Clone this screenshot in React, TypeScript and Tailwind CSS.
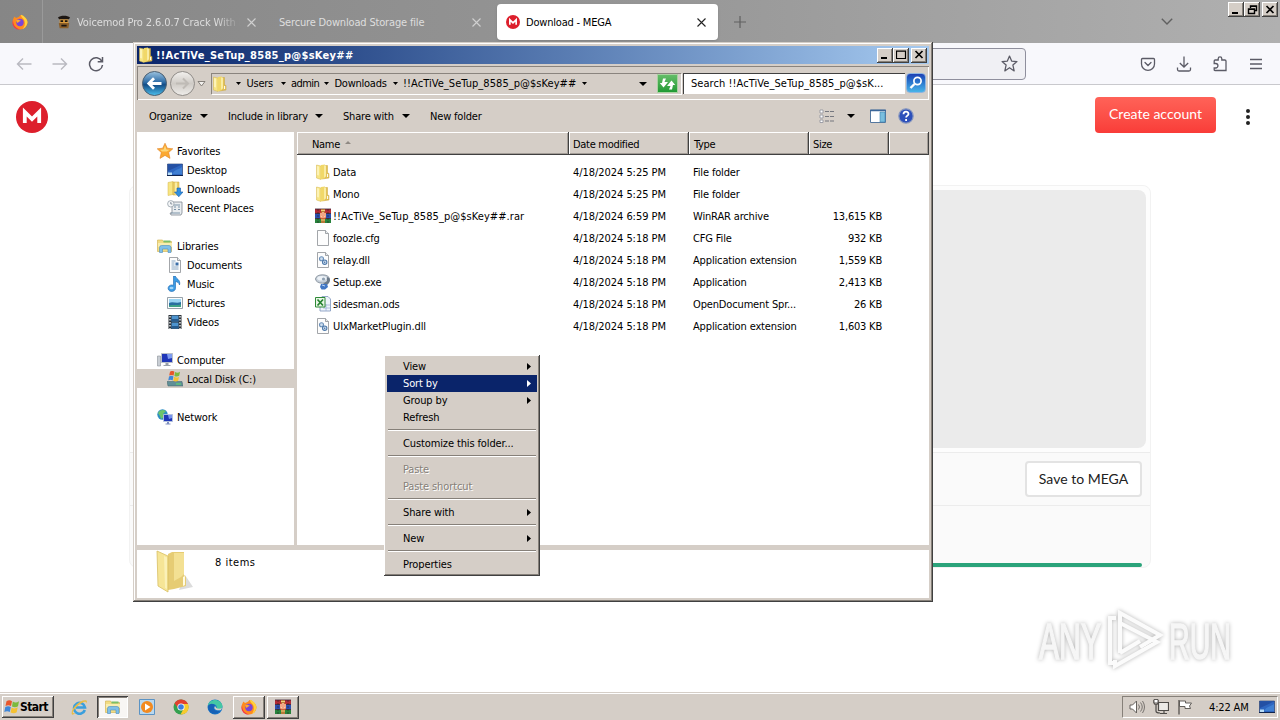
import type { ReactNode } from 'react';
import clsx from 'clsx';

const raised =
  'bg-[#d5cec7] shadow-[inset_-1px_-1px_#404040,inset_1px_1px_#ffffff,inset_-2px_-2px_#868079]';

const Svg = ({ children, size = 16 }: { children: ReactNode; size?: number }) => (
  <svg width={size} height={size} viewBox="0 0 16 16" className="block shrink-0">
    {children}
  </svg>
);

const Caret = () => (
  <svg width="8" height="4" viewBox="0 0 8 4" className="block shrink-0">
    <path d="M0 0h8L4 4z" fill="#000" />
  </svg>
);

const SmallCaret = () => (
  <svg width="5" height="3" viewBox="0 0 5 3" className="block shrink-0">
    <path d="M0 0h5L2.5 3z" fill="#000" />
  </svg>
);

const FolderIcon = () => (
  <Svg>
    <path d="M7 1.500h5.500V9l1.500.5v4.500l-7 1z" fill="#e3c255" stroke="#c9a53c" strokeWidth=".5" />
    <path d="M1.500 1l4.500 1v13.500l-4.500-1.500z" fill="#f7e583" stroke="#d5b54a" strokeWidth=".5" />
    <path d="M6 1l4-.5v13.500L6 15.500z" fill="#f1d868" />
    <path d="M9 1.500l2 0v11l-2 1z" fill="#f9eca4" />
    <path d="M2.200 2l1.600.4v9l-1.600-.4z" fill="#fdf6c4" />
    <path d="M12.600 10v3" stroke="#fff" />
  </Svg>
);

const RarIcon = ({ size = 16 }: { size?: number }) => (
  <Svg size={size}>
    <path d="M0 1h16v4.500H0z" fill="#b32a35" />
    <path d="M0 5.500h16v5H0z" fill="#2d4fb0" />
    <path d="M0 10.500h16V15H0z" fill="#28833c" />
    <path d="M0 5.500h16M0 10.500h16M0 1h16" stroke="#3a2033" strokeWidth=".8" />
    <path d="M3 1v14M13 1v14" stroke="#222" strokeWidth=".6" strokeDasharray="2 1" />
    <path d="M6 1h4v14H6z" fill="#b97b39" />
    <path d="M5 4.500h6v6H5z" fill="#e04d2f" />
    <path d="M6 5v4h4V5M8 4v4" stroke="#fff3cf" strokeWidth="1.100" fill="none" />
    <path d="M6 12h4M6 2.500h4" stroke="#f0cf7c" />
  </Svg>
);

const PageIcon = ({ children }: { children?: ReactNode }) => (
  <Svg>
    <path d="M2.500.5h8l3 3v12h-11z" fill="#fdfdfd" stroke="#8b8f94" strokeWidth=".8" />
    <path d="M10.500.5v3h3" fill="#e8ecef" stroke="#8b8f94" strokeWidth=".8" />
    {children}
  </Svg>
);

const DllIcon = () => (
  <PageIcon>
    <circle cx="6.500" cy="6.800" r="2" fill="#cfdff0" stroke="#6a8fb8" strokeWidth="1.100" />
    <circle cx="9.700" cy="10.200" r="2.200" fill="#cfdff0" stroke="#4f7aab" strokeWidth="1.100" />
    <circle cx="9.700" cy="10.200" r=".7" fill="#3f6b9f" />
  </PageIcon>
);

const SetupIcon = () => (
  <Svg>
    <ellipse cx="7.500" cy="5" rx="7" ry="4.200" fill="#c7d0da" stroke="#77838f" strokeWidth=".8" />
    <ellipse cx="6.800" cy="4.200" rx="4.500" ry="2.300" fill="#edf2f7" />
    <circle cx="8.500" cy="5" r="1.600" fill="#8fa0b2" />
    <path d="M12 3c3 1 4 3 2 6l-3 3-3-2 4-3z" fill="#6c7a89" />
    <path d="M6 10h6l1 3-3 2.500H6.500L5 13z" fill="#4277c4" />
    <path d="M7 11l3 1" stroke="#bcd6f6" />
  </Svg>
);

const OdsIcon = () => (
  <Svg>
    <path d="M7 .5h6l2.500 2.500v12H5V4z" fill="#eef3fb" stroke="#7f95bd" strokeWidth=".8" />
    <path d="M8 9h7M8 12h7M11 8v7" stroke="#9fb2d6" strokeWidth=".8" />
    <path d="M.5 1.500h9.500v9.500H.5z" fill="#e9f6e7" stroke="#2f8a37" />
    <path d="M2.500 3.500l5.500 6M8 3.500l-5.500 6" stroke="#23812d" strokeWidth="1.700" />
  </Svg>
);

const StarIcon = () => (
  <Svg>
    <path
      d="M8 .2l2.300 5 5.500.6-4.100 3.700 1.300 5.900L8 12.400l-5 3 1.300-5.900L.2 5.800l5.500-.6z"
      fill="#fba932"
      stroke="#e08326"
      strokeWidth=".6"
    />
    <path d="M8 2.500l1.400 4 3.400.3-3 1.800H5L3 6.800l3.600-.3z" fill="#fdd77a" />
  </Svg>
);

const DesktopIcon = () => (
  <Svg>
    <path d="M.5 2h15v11.500H.5z" fill="#2e66c0" stroke="#1b3266" strokeWidth=".6" />
    <path d="M1 2.500h14L1 9z" fill="#2450a4" />
    <path d="M5 12c3-5 6-4 10-7v7z" fill="#3f7fd2" />
    <path d="M1 10.500h4v2.500H1z" fill="#b7dcf7" />
    <path d="M0 13.500h16" stroke="#10244d" />
  </Svg>
);

const DownloadsIcon = () => (
  <Svg>
    <path d="M1 1.500l5-1v13l-5 1z" fill="#f7e583" stroke="#d5b54a" strokeWidth=".5" />
    <path d="M6 1h6v13H6z" fill="#ecd069" stroke="#c9a53c" strokeWidth=".5" />
    <path d="M8 1.500h2v12H8z" fill="#f9eca4" />
    <path d="M10 7h3.500v4H16l-4.200 4.800L7.500 11H10z" fill="#2f8fe0" stroke="#1a5ca8" strokeWidth=".6" />
  </Svg>
);

const RecentIcon = () => (
  <Svg>
    <path d="M5 2h10v11l-1 2H4l-1-2h2z" fill="#e9edf0" stroke="#7d878f" strokeWidth=".8" />
    <path d="M7 5h6M7 7h2M11 7h2M7 9.500h2M11 9.500h2M4 13h9" stroke="#7c94a8" />
    <circle cx="3.800" cy="3.800" r="3.200" fill="#f4f6f8" stroke="#96a0a8" strokeWidth=".8" />
    <path d="M3.800 2v2h1.500" stroke="#5c6b78" strokeWidth=".7" fill="none" />
  </Svg>
);

const LibraryIcon = ({ size = 16 }: { size?: number }) => (
  <Svg size={size}>
    <path d="M.5 2h5l1 1.500h8v10H.5z" fill="#f2dc83" stroke="#cfae4b" strokeWidth=".6" />
    <path d="M6.500 2.500h7v2h-7z" fill="#7bbf67" />
    <path d="M1 5h14v4H1z" fill="#f9edaf" />
    <path d="M2.500 14.500V9.500q0-2 2-2h7.500q2 0 2 2v5h-3V11H5.500v3.500z" fill="#7fbfe8" stroke="#4a8dc0" strokeWidth=".6" />
  </Svg>
);

const DocumentsIcon = () => (
  <PageIcon>
    <path d="M4.500 4h4M4.500 6h3M4.500 8h3M4.500 10h7M4.500 12h7" stroke="#7c9cbc" strokeWidth=".9" />
    <path d="M8.500 5.500h3v3h-3z" fill="#3b6ea8" />
  </PageIcon>
);

const MusicIcon = () => (
  <Svg>
    <path
      d="M6.500 0h1.800c.7 3 5.700 3.500 4.200 9-.3-2-2-3.200-4-3.500v6.800a3.700 3.300 0 1 1-2-3z"
      fill="#3b9be4"
      stroke="#1d66b0"
      strokeWidth=".6"
    />
    <ellipse cx="4.500" cy="12" rx="2" ry="1.300" fill="#9fd4f8" />
  </Svg>
);

const PicturesIcon = () => (
  <Svg>
    <path d="M.5 2.500h15v11H.5z" fill="#fafcfd" stroke="#7e8a94" strokeWidth=".8" />
    <path d="M2 4h12v8H2z" fill="#9bd5f3" />
    <path d="M2 8c4-2 7 1 12-1v5H2z" fill="#2a6fa0" />
    <path d="M2 10.500c4-1 8 0 12-1V12H2z" fill="#3fa386" />
  </Svg>
);

const VideosIcon = () => (
  <Svg>
    <path d="M1.500 1h13v14h-13z" fill="#2b3036" />
    <path d="M4.500 1.500h7v6h-7zM4.500 8.500h7v6h-7z" fill="#4d94cf" />
    <path d="M4.500 5h7v2.500h-7zM4.500 12h7v2.500h-7z" fill="#275c8f" />
    <path d="M3 2v13M13 2v13" stroke="#e9edf0" strokeWidth="1.400" strokeDasharray="1.500 1.500" />
  </Svg>
);

const ComputerIcon = () => (
  <Svg>
    <path d="M.5 4h3v10h-3z" fill="#c9ced4" stroke="#8a9097" strokeWidth=".6" />
    <path d="M4.500 1.500h11v9h-11z" fill="#1f36b8" stroke="#b9bfc8" />
    <path d="M10 2h5v4l-4 1z" fill="#7d9bf0" />
    <path d="M8.500 11h3v2h2v1h-7v-1h2z" fill="#9aa1aa" />
  </Svg>
);

const FlagMark = () => (
  <>
    <path d="M2.500 2.200c2-1.500 4-1.200 5.500 0L7 7c-1.500-1-3.500-1.200-5.500 0z" fill="#e8562b" />
    <path d="M8.800 2.600c2 1.200 4 1.200 6.200-.3L14 7.200c-2 1.300-4 1.200-6 .2z" fill="#7cba3d" />
    <path d="M1.300 8c2-1.200 4-1 5.500 0l-1 5c-1.500-1-3.500-1.200-5.500 0z" fill="#3f86d8" />
    <path d="M7.600 8.500c2 1.200 4 1.200 6.100-.2l-1 5c-2 1.300-4 1.200-6.100.2z" fill="#f5c133" />
  </>
);

const DiskIcon = () => (
  <Svg>
    <path d="M0 10.500h15l1 4.500H1z" fill="#5f8f97" stroke="#3e6067" strokeWidth=".5" />
    <path d="M9 13h5" stroke="#5ce06a" />
    <g transform="translate(1 -1) scale(.8)">
      <FlagMark />
    </g>
  </Svg>
);

const NetworkIcon = () => (
  <Svg>
    <circle cx="5.500" cy="5.500" r="5.200" fill="#2c8fc4" />
    <path d="M1 4c3-4 5-3 8-2L6 5l1 3-3 2-1-3z" fill="#6ec46b" />
    <path d="M6.500 5.500h9v7h-9z" fill="#1f36b8" stroke="#b9c6dc" strokeWidth=".9" />
    <path d="M11 6h4v3l-3 1z" fill="#7894ee" />
    <path d="M10 13h2v1.500h1.500v1h-5v-1H10z" fill="#7f8fc0" />
  </Svg>
);

const FirefoxIcon = ({ size = 16 }: { size?: number }) => (
  <Svg size={size}>
    <path d="M8.500 1c2 0 3 1 3.500 2 1 .4 3.500 2.500 3.500 5.500a7.500 7 0 0 1-15 0C.5 6 1.500 4 2.500 2.500L4 4c2-1 3-1 4.500-3z" fill="#ff8a1f" />
    <path d="M9 .8c3 1 6.500 4 6.500 8-1 4-3 5.500-5 6.200 2-2 3-5 2-8S9 4 9 .8z" fill="#ffd13b" />
    <path d="M1 6c0 5 2.500 8.500 7.500 9.500-5 .5-8-3-8-7z" fill="#f3314c" />
    <circle cx="8" cy="8.500" r="3.700" fill="#7a45d8" />
    <path d="M4 6.500c2-1.500 3.500-.5 5 .5-2 0-2 1-3.500 2z" fill="#ffab2e" />
  </Svg>
);

const MegaIcon = ({ size }: { size: number }) => (
  <Svg size={size}>
    <circle cx="8" cy="8" r="8" fill="#dd1f2c" />
    <path d="M4.400 11V5.500L8 9l3.600-3.500V11" fill="none" stroke="#fff" strokeWidth="1.900" />
  </Svg>
);

const WinControl = ({ kind }: { kind: 'min' | 'max' | 'restore' | 'close' }) => (
  <div className={clsx('flex h-[15px] w-4 items-center justify-center', kind === 'close' && 'ml-[2px]', raised)}>
    <svg width="11" height="10" viewBox="0 0 11 10" fill="none" stroke="#000">
      {kind === 'min' && <path d="M1 8h6" strokeWidth="2" />}
      {kind === 'max' && <path d="M.5 1h9v7.500h-9zM0 1.200h10" strokeWidth="1.200" />}
      {kind === 'restore' && <path d="M3.500 3V1h6v4.500h-2M1.500 4h6v4.500h-6zM1 4.200h7M3 1.200h7" strokeWidth="1.400" />}
      {kind === 'close' && <path d="M1.500 1l7 7M8.500 1l-7 7" strokeWidth="1.700" />}
    </svg>
  </div>
);

const CloseGlyph = ({ className }: { className: string }) => (
  <svg width="9" height="9" viewBox="0 0 9 9" className={className}>
    <path d="M.5.5l8 8M8.500.5l-8 8" stroke="currentColor" strokeWidth="1.100" />
  </svg>
);

const BrowserTabs = () => (
  <div className="flex h-[43px] bg-linear-to-r from-[#868686] via-[#969696] to-[#b0b0b0]">
    <div className="flex w-[43px] items-center border-r border-[#9a9a9a] pl-3">
      <FirefoxIcon />
    </div>
    <div className="flex w-[222px] items-center pt-px pl-[14px] text-[#dedede]">
      <Svg size={14}>
        <path d="M1 3c3-3 11-3 14 0l-2 2H3z" fill="#1d1713" />
        <path d="M3 5h10v5H3z" fill="#d89a3c" />
        <path d="M2 9h12l-1 6H3z" fill="#8b5f2a" />
        <path d="M4 6h3v2H4zM9 6h3v2H9zM5 11h6v2H5z" fill="#191411" />
      </Svg>
      <span className="ml-[6px] w-[164px] overflow-hidden py-px whitespace-nowrap mask-r-from-85% tracking-[-0.1px]">
        Voicemod Pro 2.6.0.7 Crack With L
      </span>
      <CloseGlyph className="ml-[6px] text-[#d0d0d0]" />
    </div>
    <div className="flex w-[232px] items-center pt-px pl-[14px] text-[#dedede]">
      <span className="w-[193px] whitespace-nowrap tracking-[-0.17px]">Sercure Download Storage file</span>
      <CloseGlyph className="text-[#d0d0d0]" />
    </div>
    <div className="mt-1 flex h-9 w-[221px] items-center rounded bg-white pl-[9px] shadow-sm">
      <MegaIcon size={14} />
      <span className="mt-px ml-[6px] w-[171px] whitespace-nowrap tracking-[-0.2px]">Download - MEGA</span>
      <CloseGlyph className="text-[#222]" />
    </div>
    <svg width="12" height="12" viewBox="0 0 12 12" className="mt-4 ml-4">
      <path d="M6 0v12M0 6h12" stroke="#606060" strokeWidth="1.200" />
    </svg>
    <svg width="12" height="7" viewBox="0 0 12 7" className="mt-[18px] ml-auto">
      <path d="M.8.8L6 6l5.200-5.200" stroke="#606060" strokeWidth="1.400" fill="none" />
    </svg>
    <div className="mt-[2px] mr-[2px] ml-[55px] flex">
      <WinControl kind="min" />
      <WinControl kind="restore" />
      <WinControl kind="close" />
    </div>
  </div>
);

const BrowserNav = () => (
  <div className="flex h-[42px] items-center border-b border-[#c9c9cd] bg-[#f8f8fc] pr-4 pl-4 text-[#5b5b66]">
    <svg width="16" height="16" viewBox="0 0 16 16" className="text-[#b9b9c0]" fill="none" stroke="currentColor" strokeWidth="1.400">
      <path d="M15.500 8H1.500M7 2.500L1.500 8 7 13.500" />
    </svg>
    <svg width="16" height="16" viewBox="0 0 16 16" className="ml-5 text-[#b9b9c0]" fill="none" stroke="currentColor" strokeWidth="1.400">
      <path d="M.5 8h14M9 2.500L14.500 8 9 13.500" />
    </svg>
    <svg width="16" height="16" viewBox="0 0 16 16" className="ml-5" fill="none" stroke="currentColor" strokeWidth="1.500">
      <path d="M13.800 5.200A6.500 6.500 0 1 0 14.500 9M14.500 1v4.800H9.700" />
    </svg>
    <div className="ml-[64px] flex h-8 w-[858px] items-center justify-end rounded border border-[#8f8f9d] bg-[#f0f0f4] pr-[7px]">
      <svg width="17" height="17" viewBox="0 0 16 16" fill="none" stroke="currentColor" strokeWidth="1.200">
        <path d="M8 1l2 4.700 5 .5-3.800 3.300L12.400 15 8 12l-4.400 3 1.200-5.500L1 6.200l5-.5z" strokeLinejoin="round" />
      </svg>
    </div>
    <div className="ml-auto flex gap-5">
      <svg width="16" height="16" viewBox="0 0 16 16" fill="none" stroke="currentColor" strokeWidth="1.300">
        <path d="M2.500 2.500h11q1 0 1 1V8a6.500 6.300 0 0 1-13 0V3.500q0-1 1-1z" />
        <path d="M5 6.500l3 3 3-3" strokeLinecap="round" />
      </svg>
      <svg width="16" height="16" viewBox="0 0 16 16" fill="none" stroke="currentColor" strokeWidth="1.300">
        <path d="M8 .5V11M3.800 7L8 11l4.200-4M1.500 11.500v2q0 1.500 1.500 1.500h10q1.500 0 1.500-1.500v-2" />
      </svg>
      <svg width="16" height="16" viewBox="0 0 16 16" fill="none" stroke="currentColor" strokeWidth="1.300">
        <path d="M2.200 7.500V5q0-1 1-1h3V2.700a1.800 1.800 0 0 1 3.600 0V4h3q1.200 0 1.200 1v9.500H3q-.8 0-.8-1V12h1.500a2 2 0 0 0 0-4.500z" />
      </svg>
      <svg width="16" height="16" viewBox="0 0 16 16" fill="none" stroke="currentColor" strokeWidth="1.300">
        <path d="M2 3.500h12M2 8h12M2 12.500h12" />
      </svg>
    </div>
  </div>
);

const MegaPage = () => (
  <div className="flex-1 bg-white font-['Lato',sans-serif]">
    <div className="flex h-[63px] items-center pr-[25px] pl-4">
      <MegaIcon size={32} />
      <div className="mb-1 ml-auto flex h-9 w-[121px] items-center justify-center rounded bg-linear-to-b from-[#ff6258] to-[#f93c38] pb-px text-[14px] text-white">
        Create account
      </div>
      <svg width="14" height="18" viewBox="0 0 14 18" className="ml-[25px]" fill="#222">
        <circle cx="7" cy="3" r="2" />
        <circle cx="7" cy="9" r="2" />
        <circle cx="7" cy="15" r="2" />
      </svg>
    </div>
    <div className="mt-[37px] ml-[129px] w-[1022px] rounded-lg border border-[#f2f2f2] bg-[#fafafa]">
      <div className="rounded-t-lg border-b border-[#ececec] bg-[#fdfdfd] p-1">
        <div className="h-[258px] rounded-lg bg-[#ebebeb]" />
      </div>
      <div className="flex h-[53px] items-center justify-end border-b border-[#ececec] pr-2">
        <div className="flex h-9 w-[117px] items-center justify-center rounded border-2 border-[#e3e3e3] bg-white pb-px text-[14px] text-[#222]">
          Save to MEGA
        </div>
      </div>
      <div className="flex h-[61px] items-end px-2">
        <div className="h-1 flex-1 rounded-sm bg-[#2ba37a]" />
      </div>
    </div>
  </div>
);

const Watermark = () => (
  <svg
    width="210"
    height="66"
    viewBox="0 0 210 66"
    className="absolute top-[607px] left-[1036px] drop-shadow-[0_0_2px_rgba(0,0,0,0.3)]"
  >
    <g
      className="font-['Liberation_Sans_Narrow','Liberation_Sans',sans-serif] text-[50px]"
      fill="#f6f6f6"
      stroke="#f6f6f6"
      strokeWidth="1.500"
    >
      <text x="3" y="52" textLength="62" lengthAdjust="spacingAndGlyphs">ANY</text>
      <text x="133" y="52" textLength="62" lengthAdjust="spacingAndGlyphs">RUN</text>
    </g>
    <g fill="none" stroke="#fbfbfb" strokeWidth="4">
      <path d="M84 46V6l40 22-20 12" />
      <path d="M84 16l37 19-42 24V53" />
      <path d="M80 11h-6v45h6" />
      <path d="M84 46l20-12" />
    </g>
  </svg>
);

const crumbs = [
  { label: 'Users', className: 'w-[38px] tracking-[-0.25px]' },
  { label: 'admin', className: 'w-[37px] tracking-[-0.55px]' },
  { label: 'Downloads', className: 'w-[62px] tracking-[-0.25px]' },
  { label: '!!AcTiVe_SeTup_8585_p@$sKey##', className: 'w-[183px] tracking-[0.05px]' },
];

const AddressBar = () => (
  <div className="mt-[2px] flex h-[34px] items-center border-t border-l border-[#8a847e] pb-px pl-[3px] shadow-[inset_-1px_-1px_#ffffff]">
    <svg width="67" height="28" viewBox="0 0 67 28" className="shrink-0">
      <defs>
        <linearGradient id="backFill" x2="0" y2="1">
          <stop stopColor="#9cc3e0" />
          <stop offset=".45" stopColor="#2e6ca6" />
          <stop offset=".55" stopColor="#134c86" />
          <stop offset="1" stopColor="#4cc0ee" />
        </linearGradient>
        <linearGradient id="forwardFill" x2="0" y2="1">
          <stop stopColor="#f3f1ee" />
          <stop offset=".5" stopColor="#cfcbc6" />
          <stop offset="1" stopColor="#efedea" />
        </linearGradient>
      </defs>
      <circle cx="13.500" cy="14.500" r="12" fill="url(#backFill)" stroke="#4d5f70" />
      <path d="M20.500 14.500H9M13 9.300l-5.200 5.200 5.200 5.200" fill="none" stroke="#fff" strokeWidth="2.800" />
      <circle cx="41.500" cy="14.500" r="12" fill="url(#forwardFill)" stroke="#8f8b87" />
      <path d="M35 14.500h11.500M42 9.500l5 5-5 5" fill="none" stroke="#bfbbb6" strokeWidth="2" />
      <path d="M57 12.500h7L60.500 17z" fill="#f3f1ee" stroke="#7b7671" strokeWidth=".9" />
    </svg>
    <div className="ml-[3px] flex h-[21px] w-[470px] shrink-0 items-center border-t border-l border-[#8a847e] shadow-[1px_1px_#ffffff]">
      <FolderIcon />
      <div className="ml-[8px] flex items-center">
        <SmallCaret />
        {crumbs.map((crumb) => (
          <div key={crumb.label} className="flex items-center">
            <span className={clsx('ml-[5.500px] whitespace-nowrap', crumb.className)}>{crumb.label}</span>
            <span className="-ml-1">
              <SmallCaret />
            </span>
          </div>
        ))}
      </div>
      <span className="ml-auto">
        <Caret />
      </span>
      <div className="ml-[10px] flex h-[19px] w-[21px] items-center justify-center border border-[#a9d3a1] bg-linear-to-b from-[#63bd68] to-[#1e9a34]">
        <svg width="17" height="14" viewBox="0 0 17 14" fill="#fff">
          <path d="M4 1.500h3L5.500 5H9L4.500 10.500.8 6H3z" />
          <path d="M13 12.500h-3L11.500 9H8l4.500-5.500L16.200 8H14z" />
        </svg>
      </div>
      <span className="w-[3px]" />
    </div>
    <div className="ml-[2px] flex h-[21px] w-[222px] shrink-0 items-center border-t border-l border-[#404040] bg-white pl-[7px] whitespace-nowrap tracking-[0.06px]">
      Search !!AcTiVe_SeTup_8585_p@$sK...
    </div>
    <div className="ml-px flex h-5 w-5 items-center justify-center rounded-sm border border-[#8eb4e0] bg-linear-to-b from-[#1f3fb4] to-[#49b4e8]">
      <svg width="16" height="16" viewBox="0 0 16 16" fill="none" stroke="#fff">
        <circle cx="9.500" cy="6" r="3.600" strokeWidth="1.700" />
        <path d="M6.500 9L2.500 13" strokeWidth="2.400" />
      </svg>
    </div>
  </div>
);

const Toolbar = () => (
  <div className="flex h-8 items-center pr-[15px] pl-3 whitespace-nowrap tracking-[-0.18px]">
    <span className="w-[51px]">Organize</span>
    <Caret />
    <span className="ml-5 w-[87px]">Include in library</span>
    <Caret />
    <span className="ml-5 w-[59px]">Share with</span>
    <Caret />
    <span className="ml-5">New folder</span>
    <span className="ml-auto">
      <Svg>
        <path d="M1 2h3v3H1zM1 7h3v3H1zM1 12h3v2.500H1z" fill="#fff" stroke="#8d8f9b" strokeWidth=".8" />
        <path d="M6 3.500h4M11 3.500h4M6 8.500h4M11 8.500h4M6 13h4M11 13h4" stroke="#75777f" />
      </Svg>
    </span>
    <span className="ml-3">
      <Caret />
    </span>
    <span className="ml-[15px]">
      <Svg>
        <path d="M.5 2h15v12.500H.5z" fill="#fff" stroke="#54779f" />
        <path d="M0 2.500h16" stroke="#3b6698" strokeWidth="1.500" />
        <path d="M10 4h5v10h-5z" fill="#79bede" stroke="#3e83b0" strokeWidth=".6" />
      </Svg>
    </span>
    <span className="ml-3">
      <Svg>
        <circle cx="8" cy="8" r="7.200" fill="#2d50ba" stroke="#8797bf" strokeWidth="1.200" />
        <path d="M5.500 6.300c0-3.500 5-3.300 5-.4 0 1.700-2.400 1.800-2.400 3.700M8.100 11v2" fill="none" stroke="#fff" strokeWidth="1.800" />
      </Svg>
    </span>
  </div>
);

type TreeRow = { label: string; icon: ReactNode; root?: boolean; selected?: boolean } | null;

// null leaves one empty row between the groups
const treeRows: TreeRow[] = [
  { label: 'Favorites', icon: <StarIcon />, root: true },
  { label: 'Desktop', icon: <DesktopIcon /> },
  { label: 'Downloads', icon: <DownloadsIcon /> },
  { label: 'Recent Places', icon: <RecentIcon /> },
  null,
  { label: 'Libraries', icon: <LibraryIcon />, root: true },
  { label: 'Documents', icon: <DocumentsIcon /> },
  { label: 'Music', icon: <MusicIcon /> },
  { label: 'Pictures', icon: <PicturesIcon /> },
  { label: 'Videos', icon: <VideosIcon /> },
  null,
  { label: 'Computer', icon: <ComputerIcon />, root: true },
  { label: 'Local Disk (C:)', icon: <DiskIcon />, selected: true },
  null,
  { label: 'Network', icon: <NetworkIcon />, root: true },
];

const files = [
  { name: 'Data', icon: <FolderIcon />, date: '4/18/2024 5:25 PM', type: 'File folder', size: '' },
  { name: 'Mono', icon: <FolderIcon />, date: '4/18/2024 5:25 PM', type: 'File folder', size: '' },
  { name: '!!AcTiVe_SeTup_8585_p@$sKey##.rar', icon: <RarIcon />, date: '4/18/2024 6:59 PM', type: 'WinRAR archive', size: '13,615 KB' },
  { name: 'foozle.cfg', icon: <PageIcon />, date: '4/18/2024 5:18 PM', type: 'CFG File', size: '932 KB' },
  { name: 'relay.dll', icon: <DllIcon />, date: '4/18/2024 5:18 PM', type: 'Application extension', size: '1,559 KB' },
  { name: 'Setup.exe', icon: <SetupIcon />, date: '4/18/2024 5:18 PM', type: 'Application', size: '2,413 KB' },
  { name: 'sidesman.ods', icon: <OdsIcon />, date: '4/18/2024 5:18 PM', type: 'OpenDocument Spr...', size: '26 KB' },
  { name: 'UIxMarketPlugin.dll', icon: <DllIcon />, date: '4/18/2024 5:18 PM', type: 'Application extension', size: '1,603 KB' },
];

const HeaderCell = ({ className, children }: { className: string; children?: ReactNode }) => (
  <div
    className={clsx(
      'flex h-[23px] items-center pt-[2px] shadow-[inset_-1px_-1px_#404040,inset_1px_1px_#ffffff,inset_-2px_-2px_#a39d97]',
      className,
    )}
  >
    {children}
  </div>
);

const FileList = () => (
  <div className="flex-1 bg-white whitespace-nowrap">
    <div className="flex bg-[#d5cec7] tracking-[-0.3px]">
      <HeaderCell className="w-[272px] pl-[15px]">
        Name
        <svg width="6" height="3" viewBox="0 0 6 3" className="mb-1 ml-[5px]">
          <path d="M3 0l3 3H0z" fill="#8f8983" />
        </svg>
      </HeaderCell>
      <HeaderCell className="w-[120px] pl-1">Date modified</HeaderCell>
      <HeaderCell className="w-[120px] pl-[5px]">Type</HeaderCell>
      <HeaderCell className="w-[80px] pl-1">Size</HeaderCell>
      <HeaderCell className="flex-1" />
    </div>
    <div className="pt-[6px] pl-[18px]">
      {files.map((file) => (
        <div key={file.name} className="flex h-[22px] items-center">
          {file.icon}
          <span className={clsx('ml-[2px] w-[240px]', file.name.endsWith('.rar') ? 'tracking-[0.06px]' : 'tracking-[-0.12px]')}>
            {file.name}
          </span>
          <span className="w-[120px] tracking-[-0.05px]">{file.date}</span>
          <span className="w-[109px] tracking-[-0.15px]">{file.type}</span>
          <span className="w-20 text-right tracking-[-0.2px]">{file.size}</span>
        </div>
      ))}
    </div>
  </div>
);

const ExplorerWindow = () => (
  <div className="absolute top-[42px] left-[133px] flex h-[560px] w-[800px] flex-col bg-[#d5cec7] p-1 shadow-[inset_-1px_-1px_#404040,inset_1px_1px_#d5cec7,inset_-2px_-2px_#868079,inset_2px_2px_#ffffff]">
    <div className="flex h-[18px] items-center bg-linear-to-r from-[#0a246a] to-[#a6caf0] pr-[2px] pl-px">
      <FolderIcon />
      <span className="ml-[2px] font-bold tracking-[0.28px] whitespace-nowrap text-white">!!AcTiVe_SeTup_8585_p@$sKey##</span>
      <div className="ml-auto flex">
        <WinControl kind="min" />
        <WinControl kind="max" />
        <WinControl kind="close" />
      </div>
    </div>
    <AddressBar />
    <Toolbar />
    <div className="flex h-[413px]">
      <div className="w-[157px] bg-white pt-[9px]">
        {treeRows.map((row, index) =>
          row ? (
            <div
              key={row.label}
              className={clsx(
                'flex h-[19px] items-center gap-[4px] tracking-[-0.15px] whitespace-nowrap',
                row.root ? 'pl-5' : 'pl-[30px]',
                row.selected && 'bg-[#d5cec7]',
              )}
            >
              {row.icon}
              <span className="pt-[2px]">{row.label}</span>
            </div>
          ) : (
            <div key={index} className="h-[19px]" />
          ),
        )}
      </div>
      <div className="w-[3px]" />
      <FileList />
    </div>
    <div className="mt-[5px] flex h-[48px] bg-white pl-[18px]">
      <svg width="40" height="44" viewBox="0 0 40 44">
        <path d="M24 40l14-3-8-12z" fill="#dcdcdc" />
        <path d="M13 4l4-2h12v23l2 2v9l-12 3-6 1z" fill="#e6cc74" />
        <path d="M19 3h10v21l-3 3-7 4z" fill="#f3e093" />
        <path d="M2 1l11 5v36L3 36z" fill="#f6e596" stroke="#d8bf63" strokeWidth=".8" />
        <path d="M9 6l3 1.500V39l-2-1z" fill="#fbf1b8" />
        <path d="M28 27l2-1v9l-2 1z" fill="#fffbe2" />
      </svg>
      <span className="mt-[7px] ml-[20px] tracking-[0.5px]">8 items</span>
    </div>
  </div>
);

type MenuEntry = { label: string; sub?: boolean; active?: boolean; disabled?: boolean };

const menuGroups: MenuEntry[][] = [
  [
    { label: 'View', sub: true },
    { label: 'Sort by', sub: true, active: true },
    { label: 'Group by', sub: true },
    { label: 'Refresh' },
  ],
  [{ label: 'Customize this folder...' }],
  [
    { label: 'Paste', disabled: true },
    { label: 'Paste shortcut', disabled: true },
  ],
  [{ label: 'Share with', sub: true }],
  [{ label: 'New', sub: true }],
  [{ label: 'Properties' }],
];

const ContextMenu = () => (
  <div className={clsx('absolute top-[355px] left-[384px] w-[156px] p-[3px] tracking-[-0.12px] whitespace-nowrap', raised)}>
    {menuGroups.map((group, index) => (
      <div key={index}>
        {index > 0 && <div className="mx-px mt-[3px] mb-1 h-[2px] border-t border-b border-t-[#868079] border-b-white" />}
        {group.map((entry) => (
          <div
            key={entry.label}
            className={clsx(
              'flex h-[17px] items-center justify-between pr-[6px] pl-4',
              entry.active && 'bg-[#0a246a] text-white',
              entry.disabled && 'text-[#868079] [text-shadow:1px_1px_#ffffff]',
            )}
          >
            {entry.label}
            {entry.sub && (
              <svg width="4" height="7" viewBox="0 0 4 7">
                <path d="M0 0l4 3.500L0 7z" fill="currentColor" />
              </svg>
            )}
          </div>
        ))}
      </div>
    ))}
  </div>
);

const EdgeIcon = () => (
  <Svg>
    <circle cx="8" cy="8" r="7.500" fill="#1976c9" />
    <path d="M.8 7C2-1 14-1 15.500 7c0 4-5 4-6 2.500C11 6 6 3 .8 7z" fill="#45c7a4" />
    <path d="M1 7c2-3 6-3 7 0-3 2-1 6 5 5-4 5-12 3-12-5z" fill="#1761b5" />
    <path d="M8 7c-2 3 1 5 6 4l1-2c-2 1-5 1-6-.5z" fill="#d5cec7" />
  </Svg>
);

const Taskbar = () => (
  <div className="flex h-7 items-center bg-[#d5cec7] pt-[2px] pr-[2px] pl-[2px] shadow-[inset_0_1px_#d5cec7,inset_0_2px_#ffffff]">
    <div className={clsx('flex h-[22px] w-[52px] items-center pl-[2px]', raised)}>
      <Svg>
        <FlagMark />
      </Svg>
      <span className="text-[12px] font-bold tracking-[-0.55px]">Start</span>
    </div>
    <div className="ml-[10px] flex h-[22px] w-[30px] items-center justify-center">
      <Svg>
        <path d="M13.800 11A5.500 5.500 0 1 1 14 8.500H5" fill="none" stroke="#3a9fdd" strokeWidth="2.600" />
        <path d="M1 15.500C-1.500 11 9 0 15.500 1.500c.8 1 .3 2-.5 3 .3-1.500-.5-2-2-1.500C8 4.500 2 11 1.800 13.500c.4 1 1.700.8 2.700.3-1.200 1.200-2.500 2.200-3.500 1.700z" fill="#e9bd45" />
      </Svg>
    </div>
    <div className="ml-[3px] flex h-[22px] w-[31px] items-center justify-center bg-[#f8f6f4] shadow-[inset_1px_1px_#404040,inset_-1px_-1px_#ffffff,inset_2px_2px_#868079]">
      <LibraryIcon />
    </div>
    <div className="ml-[4px] flex w-[30px] justify-center">
      <Svg>
        <path d="M.5.5h15v15H.5z" fill="#b9d8ef" stroke="#5b93c4" />
        <circle cx="8" cy="8" r="6" fill="#f28a20" />
        <path d="M6 4.500v7L11.500 8z" fill="#fff" />
      </Svg>
    </div>
    <div className="ml-[4px] flex w-[30px] justify-center">
      <Svg>
        <circle cx="8" cy="8" r="7.500" fill="#34a04f" />
        <path d="M1.500 4.300A7.500 7.500 0 0 1 15 5H8L5 9z" fill="#e2402f" />
        <path d="M15 5a7.500 7.500 0 0 1-7.500 10.500L11.500 8 9 5z" fill="#f8cb2e" />
        <circle cx="8" cy="8" r="3.600" fill="#fff" />
        <circle cx="8" cy="8" r="2.800" fill="#3a7de0" />
      </Svg>
    </div>
    <div className="ml-[4px] flex w-[30px] justify-center">
      <EdgeIcon />
    </div>
    <div className={clsx('ml-[3px] flex h-[23px] w-8 items-center justify-center', raised)}>
      <FirefoxIcon />
    </div>
    <div className={clsx('ml-[2px] flex h-[23px] w-8 items-center justify-center', raised)}>
      <RarIcon />
    </div>
    <div className="ml-auto flex h-[22px] w-[156px] items-center border border-t-[#868079] border-r-white border-b-white border-l-[#868079] pl-[6px]">
      <Svg>
        <path d="M1 6h2.500L7.500 2v12l-4-4H1z" fill="#fff" stroke="#65615d" />
        <path d="M9.500 5.500q2 2.500 0 5M11.500 3.500q3.500 4.500 0 9M13.500 2q4 6 0 12" fill="none" stroke="#77736f" />
      </Svg>
      <span className="ml-2">
        <Svg>
          <path d="M5.500 3.500h10v8h-10z" fill="#eceae7" stroke="#4e4b48" strokeWidth="1.200" />
          <path d="M7 14.500h7M11 12v2M1 1v3q0 1.500 2 1.500T5 4V1M3 5.500V12q0 2 4 2" fill="none" stroke="#4e4b48" strokeWidth="1.200" />
          <path d="M1 .5h4V4H1z" fill="#fff" stroke="#4e4b48" strokeWidth=".9" />
        </Svg>
      </span>
      <span className="ml-2">
        <Svg>
          <path d="M2 1v14.500" stroke="#55514e" strokeWidth="1.300" />
          <path d="M2.500 2h6v2h6l-2 3 1 2.500H8v-2H2.500z" fill="#fff" stroke="#55514e" strokeWidth=".9" />
        </Svg>
      </span>
      <span className="ml-[16px] w-[50px] tracking-[-0.15px] whitespace-nowrap">4:22 AM</span>
      <DesktopIcon />
    </div>
  </div>
);

export default function App() {
  return (
    <div className="relative flex h-[720px] w-[1280px] flex-col overflow-hidden bg-white font-['DejaVu_Sans_Condensed','DejaVu_Sans',sans-serif] text-[11px] leading-none text-black">
      <BrowserTabs />
      <BrowserNav />
      <MegaPage />
      <Taskbar />
      <Watermark />
      <ExplorerWindow />
      <ContextMenu />
    </div>
  );
}
